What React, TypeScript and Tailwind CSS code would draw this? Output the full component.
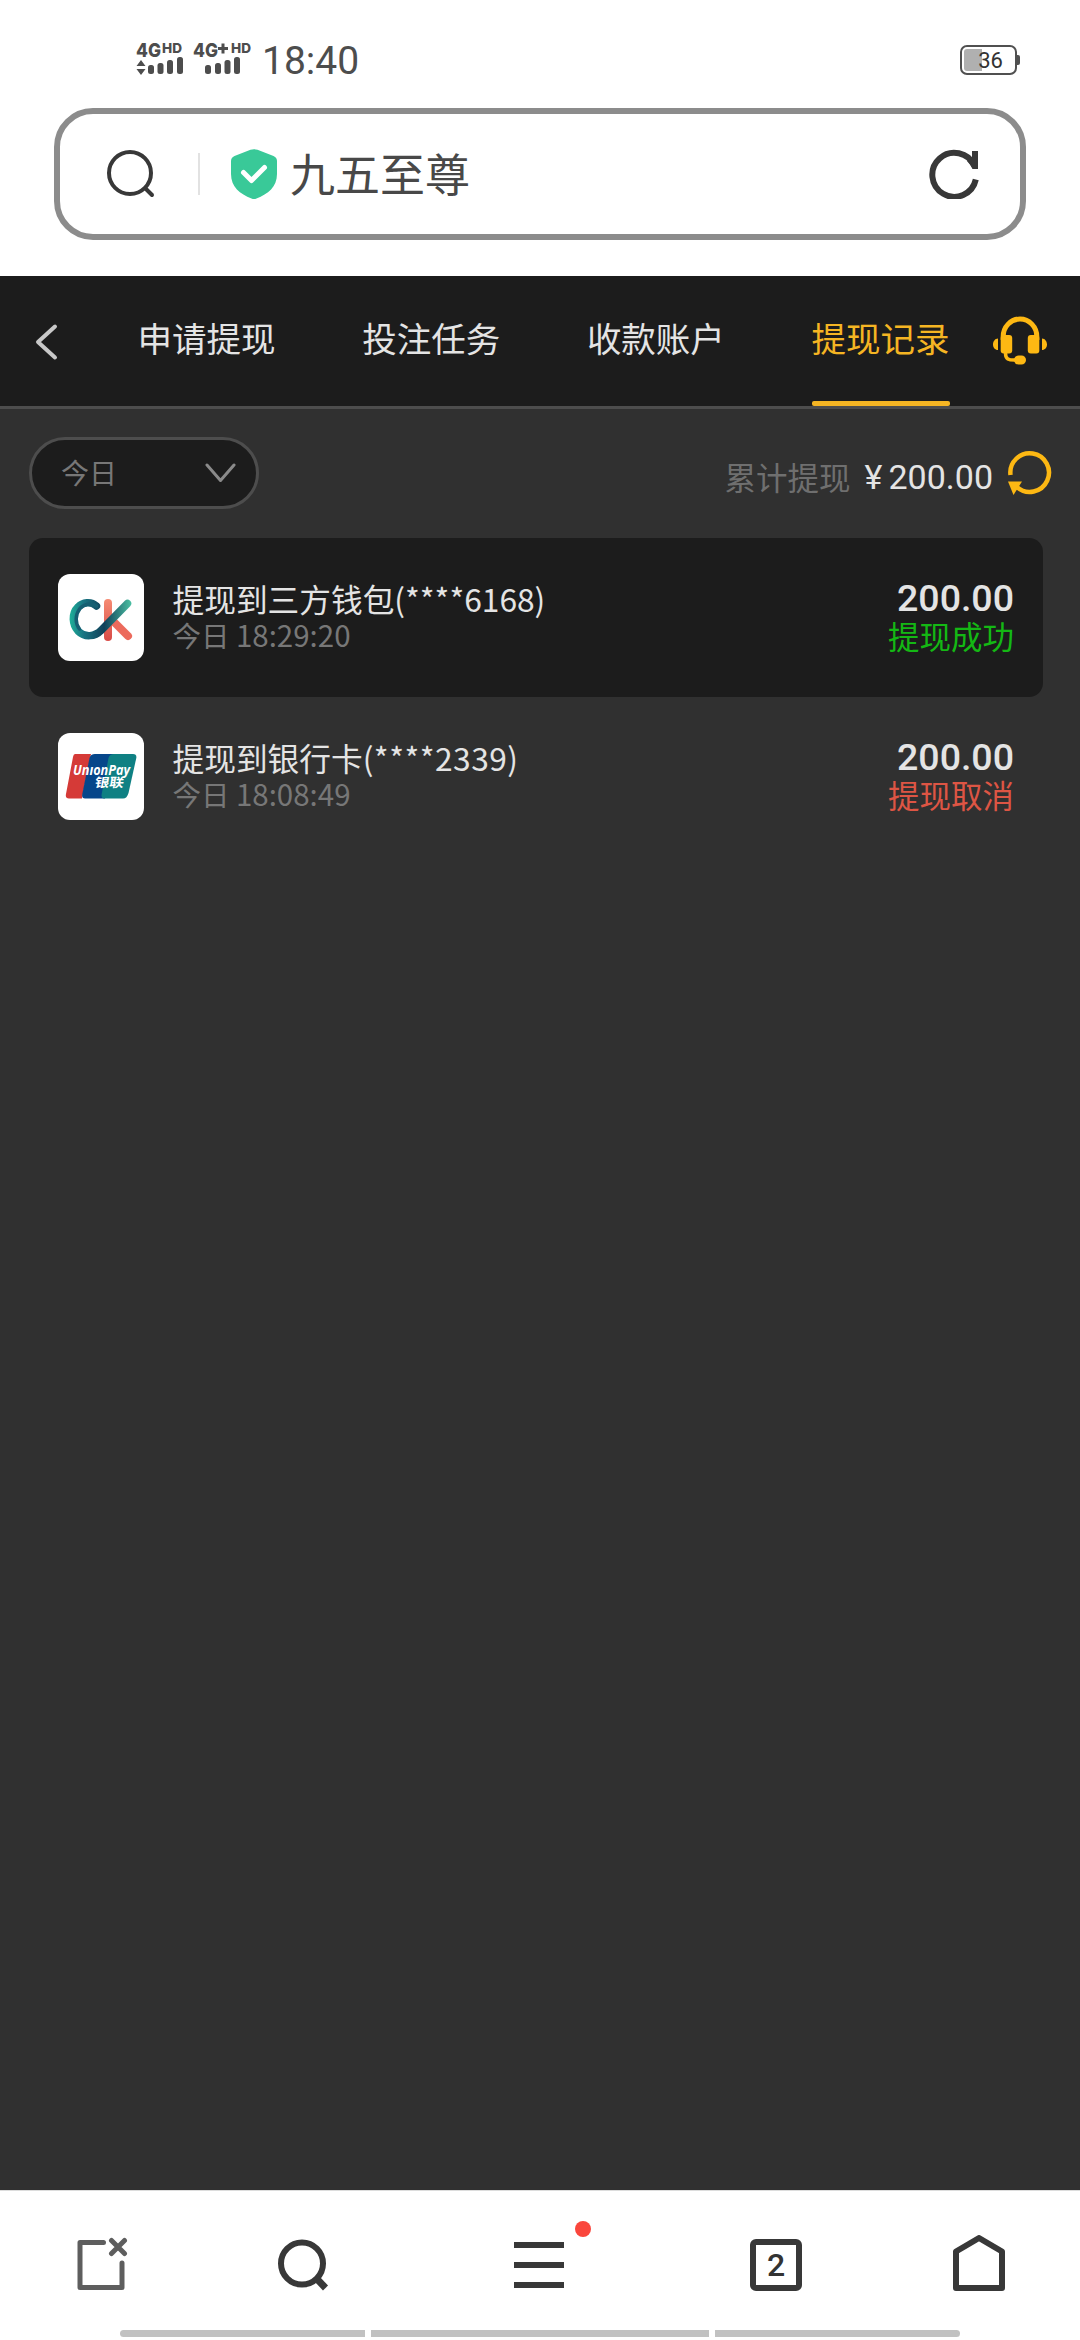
import clsx from "clsx";

const tabs = ["申请提现", "投注任务", "收款账户", "提现记录"];

const records = [
    { id: 1, logo: "ck", title: "提现到三方钱包", tail: "(****6168)", time: "18:29:20", amount: "200.00", status: "提现成功", ok: true },
    { id: 2, logo: "union", title: "提现到银行卡", tail: "(****2339)", time: "18:08:49", amount: "200.00", status: "提现取消", ok: false },
];

function SignalOne() {
    return (
        <svg className="overflow-visible" width="48" height="34" viewBox="0 0 48 34" fill="#4d4d4d">
            <text x="0" y="16" fontFamily="Inter, Roboto, sans-serif" fontWeight="800" fontSize="19" textLength="25" lengthAdjust="spacingAndGlyphs">4G</text>
            <text x="26" y="11.500" fontFamily="Inter, Roboto, sans-serif" fontWeight="800" fontSize="13.500" textLength="20" lengthAdjust="spacingAndGlyphs">HD</text>
            <path d="M0.5 25L5 19L9.500 25ZM0.500 28L5 34L9.500 28Z" />
            <rect x="12" y="24" width="6" height="9" rx="2.500" />
            <rect x="21.500" y="22" width="6" height="11" rx="2.500" />
            <rect x="31" y="19" width="6" height="14" rx="2.500" />
            <rect x="41" y="16" width="6" height="17" rx="2.500" />
        </svg>
    );
}

function SignalTwo() {
    return (
        <svg className="overflow-visible" width="59" height="34" viewBox="0 0 59 34" fill="#4d4d4d">
            <text x="0" y="16" fontFamily="Inter, Roboto, sans-serif" fontWeight="800" fontSize="19" textLength="25" lengthAdjust="spacingAndGlyphs">4G</text>
            <path d="M25 7.500H35M30 2.500V12.500" stroke="#4d4d4d" strokeWidth="3" />
            <text x="38" y="11.500" fontFamily="Inter, Roboto, sans-serif" fontWeight="800" fontSize="13.500" textLength="20" lengthAdjust="spacingAndGlyphs">HD</text>
            <rect x="12" y="24" width="6" height="9" rx="2.500" />
            <rect x="22" y="22" width="6" height="11" rx="2.500" />
            <rect x="31.500" y="19" width="6" height="14" rx="2.500" />
            <rect x="41" y="16" width="6" height="17" rx="2.500" />
        </svg>
    );
}

function StatusBar() {
    return (
        <div className="flex h-[108px] items-start pl-[136px] pr-[60px] pt-[41px]">
            <SignalOne />
            <div className="ml-[9px]">
                <SignalTwo />
            </div>
            <span className="ml-[10px] font-[Roboto,sans-serif] text-[39px] leading-[40px] text-[#4d4d4d]">18:40</span>
            <div className="ml-auto mt-[4px] flex items-center">
                <div className="relative flex h-[30px] w-[57px] items-center justify-center rounded-[7px] border-[2.500px] border-[#505050]">
                    <div className="absolute left-[2px] top-[2px] h-[22px] w-[18px] rounded-l-[3px] bg-[#b0b0b0]" />
                    <span className="relative mt-[1px] ml-[4px] font-[Roboto,sans-serif] text-[22px] leading-[26px] text-[#333333]">36</span>
                </div>
                <div className="h-[10px] w-[3px] rounded-r-[2px] bg-[#505050]" />
            </div>
        </div>
    );
}

function AddressBar() {
    return (
        <div className="mx-[54px] flex h-[132px] items-center rounded-[39px] border-[6px] border-[#8c8c8c] pl-[46px] pr-[39px]">
            <svg width="50" height="50" viewBox="0 0 50 50" fill="none" stroke="#383838" strokeWidth="4" strokeLinecap="round">
                <circle cx="24" cy="24" r="21" />
                <path d="M39.500 39.500L46 46" />
            </svg>
            <div className="ml-[42px] h-[42px] w-[2px] bg-[#e2e2e2]" />
            <svg className="ml-[31px]" width="46" height="50" viewBox="0 0 46 50">
                <path d="M19.500 0.800Q23 -0.500 26.500 0.800L42.500 7Q46 8.500 46 12V25C46 38 37 45 25.500 49.500Q23 50.500 20.500 49.500C9 45 0 38 0 25V12Q0 8.500 3.500 7Z" fill="#39c998" />
                <path d="M12.500 23.500L20.500 31.500L33.500 18.500" fill="none" stroke="#fff" strokeWidth="5" strokeLinecap="round" strokeLinejoin="round" />
            </svg>
            <span className="-mt-[3px] ml-[13px] text-[45px] leading-[66px] text-[#484848]">九五至尊</span>
            <svg className="ml-auto" width="52" height="50" viewBox="0 0 52 50" fill="none" stroke="#383838" strokeWidth="6">
                <path d="M46.800 30.500A22 22 0 1 1 45.400 16.800" />
                <path d="M43 10V2H49V20H43.500Q41 15 38 12Z" fill="#383838" stroke="none" />
            </svg>
        </div>
    );
}

function Headset() {
    return (
        <svg width="54" height="49" viewBox="0 0 54 49" fill="#fdb813">
            <path d="M10.200 24V20.500A16.800 17.500 0 0 1 43.800 20.500V24" fill="none" stroke="#fdb813" strokeWidth="5" />
            <rect x="7.700" y="19" width="11.500" height="18.500" rx="3" />
            <rect x="34.800" y="19" width="11.500" height="18.500" rx="3" />
            <path d="M5 22.500V34C2 34 0 31.500 0 28.500S2 22.500 5 22.500ZM49 22.500V34C52 34 54 31.500 54 28.500S52 22.500 49 22.500Z" />
            <path d="M12.500 37C12.500 43 15 44.500 24 44" fill="none" stroke="#fdb813" strokeWidth="3.500" />
            <rect x="21" y="39.500" width="12" height="9" rx="4.500" />
        </svg>
    );
}

function NavTabs() {
    return (
        <header className="flex h-[133px] items-stretch border-b-[3px] border-[#4d4d4d] bg-[#1c1c1c] pl-[34px]">
            <svg className="mt-[47px] shrink-0" width="24" height="38" viewBox="0 0 24 38" fill="none" stroke="#c8c8c8" strokeWidth="4" strokeLinecap="round" strokeLinejoin="round">
                <path d="M21 3.500L4 19L21 34.500" />
            </svg>
            <nav className="ml-[79.500px] flex gap-[86.700px]">
                {tabs.map((tab, i) => (
                    <div key={tab} className={clsx("flex w-[138px] flex-col justify-between whitespace-nowrap", i === 3 ? "text-[#f5b523]" : "text-[#e4e4e4]")}>
                        <span className="mt-[36px] text-[34.500px] leading-[51px]">{tab}</span>
                        {i === 3 && <div className="h-[5px] rounded-[2px] bg-[#f5b523]" />}
                    </div>
                ))}
            </nav>
            <div className="ml-[43px] mt-[40px]">
                <Headset />
            </div>
        </header>
    );
}

function FilterRow() {
    return (
        <div className="flex h-[129px] items-start pl-[29px] pr-[28px] pt-[28px]">
            <div className="flex h-[72px] w-[230px] items-center justify-between rounded-full border-[3px] border-[#4d4d4d] bg-[#1c1c1c] pl-[29px] pr-[20px]">
                <span className="-mt-[2px] text-[28px] leading-[41px] text-[#777777]">今日</span>
                <svg width="31" height="20" viewBox="0 0 31 20" fill="none" stroke="#8a8a8a" strokeWidth="3" strokeLinecap="round" strokeLinejoin="round">
                    <path d="M2 2L15.500 17.500L29 2" />
                </svg>
            </div>
            <div className="ml-auto flex items-start">
                <span className="mt-[16px] text-[31.500px] leading-[46px] text-[#6f6f6f]">累计提现</span>
                <span className="ml-[14px] mt-[18px] font-[Roboto,sans-serif] text-[34px] leading-[44px] text-[#e4e4e4]">¥</span>
                <span className="ml-[6px] mt-[18px] font-[Roboto,sans-serif] text-[34px] leading-[44px] text-[#e4e4e4]">200.00</span>
                <svg className="ml-[14px] mt-[13px]" width="45" height="46" viewBox="0 0 45 46" fill="none" stroke="#fdb813" strokeWidth="4.500">
                    <path d="M3.500 25A19.300 19.300 0 1 1 10 37.200" />
                    <path d="M1 31.500H15L6.500 45Z" fill="#fdb813" stroke="none" />
                </svg>
            </div>
        </div>
    );
}

function CkLogo() {
    return (
        <svg width="86" height="87" viewBox="0 0 86 87" fill="none" strokeLinecap="round">
            <defs>
                <linearGradient id="ckTeal" x1="12" y1="0" x2="74" y2="0" gradientUnits="userSpaceOnUse">
                    <stop offset="0" stopColor="#1fae98" />
                    <stop offset="0.220" stopColor="#187482" />
                    <stop offset="0.550" stopColor="#104059" />
                    <stop offset="1" stopColor="#4cc2a4" />
                </linearGradient>
                <linearGradient id="ckRed" x1="0" y1="26" x2="0" y2="66" gradientUnits="userSpaceOnUse">
                    <stop offset="0" stopColor="#f58a72" />
                    <stop offset="1" stopColor="#d94b47" />
                </linearGradient>
            </defs>
            <path d="M50 29V63" stroke="url(#ckRed)" strokeWidth="8" />
            <path d="M54 46L70 62" stroke="#ec6a5c" strokeWidth="8" />
            <path d="M38.500 32C33 27 24.500 28 20 33C13 40 14.500 51 20 57C27 64 37 62.500 43 56.500L69.500 29.500" stroke="url(#ckTeal)" strokeWidth="7.500" />
            <path d="M38.500 32C33 28.500 26 30 22 34.500C17 41 17 49 21.500 55" stroke="#155f72" strokeWidth="3.500" />
        </svg>
    );
}

function UnionPayLogo() {
    return (
        <svg width="86" height="86" viewBox="0 0 86 86">
            <path d="M17 21H33L24 65.500H11Q7 65.500 8 61L15 24Q15.500 21 17 21Z" fill="#d53a37" />
            <path d="M37 21H57L47 65.500H27Q23.500 65.500 24.300 61L31.500 25Q32.500 21 37 21Z" fill="#06468a" />
            <path d="M56 21H75Q79 21 78.300 25L70.500 60Q69 65.500 65 65.500H46Q43 65.500 43.700 61L50.500 25Q51.500 21 56 21Z" fill="#0f8083" />
            <text x="15" y="42" fill="#fff" fontFamily="'Open Sans', sans-serif" fontStyle="italic" fontWeight="700" fontSize="14.500" textLength="57" lengthAdjust="spacingAndGlyphs">UnıonPay</text>
            <text x="38" y="54.500" fill="#fff" fontFamily="'Noto Sans CJK SC', sans-serif" fontWeight="700" fontSize="12.500" textLength="29" lengthAdjust="spacingAndGlyphs" transform="translate(7 0) skewX(-9)">银联</text>
        </svg>
    );
}

function RecordRow({ record }: { record: (typeof records)[number] }) {
    return (
        <div className={clsx("flex h-[158.500px] items-start rounded-[14px] px-[29px]", record.ok && "bg-[#1c1c1c]")}>
            <div className="mt-[36px] h-[87px] w-[86px] overflow-hidden rounded-[12px] bg-white">
                {record.logo === "ck" ? <CkLogo /> : <UnionPayLogo />}
            </div>
            <div className="ml-[28.500px] mt-[40px] flex flex-col">
                <div className="text-[31.700px] leading-[40px] text-[#e4e4e4]">
                    {record.title}
                    <span className={clsx(!record.ok && "tracking-[0.5px]")}>{record.tail}</span>
                </div>
                <div className="text-[28.500px] leading-[33px] text-[#777777]">
                    今日 <span className="text-[29.500px] leading-[33px]">{record.time}</span>
                </div>
            </div>
            <div className="ml-auto mt-[38px] flex flex-col items-end">
                <span className="font-[Roboto,sans-serif] text-[37.500px] leading-[44px] font-medium text-[#e4e4e4]">{record.amount}</span>
                <span className={clsx("-mt-[2px] text-[31.500px] leading-[34px]", record.ok ? "text-[#14b814]" : "text-[#dd5544]")}>{record.status}</span>
            </div>
        </div>
    );
}

function BottomBar() {
    return (
        <footer className="h-[150px] bg-white">
            <div className="flex h-[140px] items-start border-t border-[#dcdcdc] pl-[76px] pt-[40px]">
                <svg className="mt-[6px]" width="52" height="56" viewBox="0 0 52 56" fill="none" stroke="#5e5e5e" strokeWidth="5" strokeLinecap="round" strokeLinejoin="round">
                    <path d="M27.500 5.500H4V50.500H46V26" />
                    <path d="M35.500 3.500L48.500 16.500M48.500 3.500L35.500 16.500" />
                </svg>
                <svg className="ml-[150px] mt-[8px]" width="52" height="54" viewBox="0 0 52 54" fill="none" stroke="#383838" strokeWidth="6">
                    <ellipse cx="24" cy="24.500" rx="21" ry="21" />
                    <path d="M38 39L47.500 49" strokeWidth="7" />
                </svg>
                <div className="relative ml-[184px] mt-[11px] flex w-[50px] flex-col gap-[14px]">
                    <div className="h-[6px] bg-[#383838]" />
                    <div className="h-[6px] bg-[#383838]" />
                    <div className="h-[6px] bg-[#383838]" />
                    <div className="absolute -top-[21px] left-[61px] h-[16px] w-[16px] rounded-full bg-[#fa463c]" />
                </div>
                <div className="ml-[186px] mt-[8px] flex h-[52px] w-[52px] items-center justify-center rounded-[6px] border-[6px] border-[#383838] font-[Roboto,sans-serif] text-[32px] leading-[40px] font-medium text-[#333333]">
                    2
                </div>
                <svg className="ml-[151px] mt-[4px]" width="52" height="56" viewBox="0 0 52 56" fill="none" stroke="#383838" strokeWidth="6" strokeLinejoin="round">
                    <path d="M3 16.500L26 3L49 16.500V53H3Z" />
                </svg>
            </div>
            <div className="flex gap-[6px] pl-[120px]">
                <div className="h-[7px] w-[245px] rounded-l-full bg-[#c1c1c1]" />
                <div className="h-[7px] w-[338px] bg-[#c1c1c1]" />
                <div className="h-[7px] w-[245px] rounded-r-full bg-[#c1c1c1]" />
            </div>
        </footer>
    );
}

export default function App() {
    return (
        <div className="flex h-[2340px] w-[1080px] flex-col overflow-hidden bg-white font-['Noto_Sans_CJK_SC',sans-serif]">
            <div className="h-[276px] shrink-0">
                <StatusBar />
                <AddressBar />
            </div>
            <NavTabs />
            <main className="flex-1 bg-[#303030]">
                <FilterRow />
                <div className="ml-[29px] w-[1014px]">
                    {records.map((record) => (
                        <RecordRow key={record.id} record={record} />
                    ))}
                </div>
            </main>
            <BottomBar />
        </div>
    );
}
